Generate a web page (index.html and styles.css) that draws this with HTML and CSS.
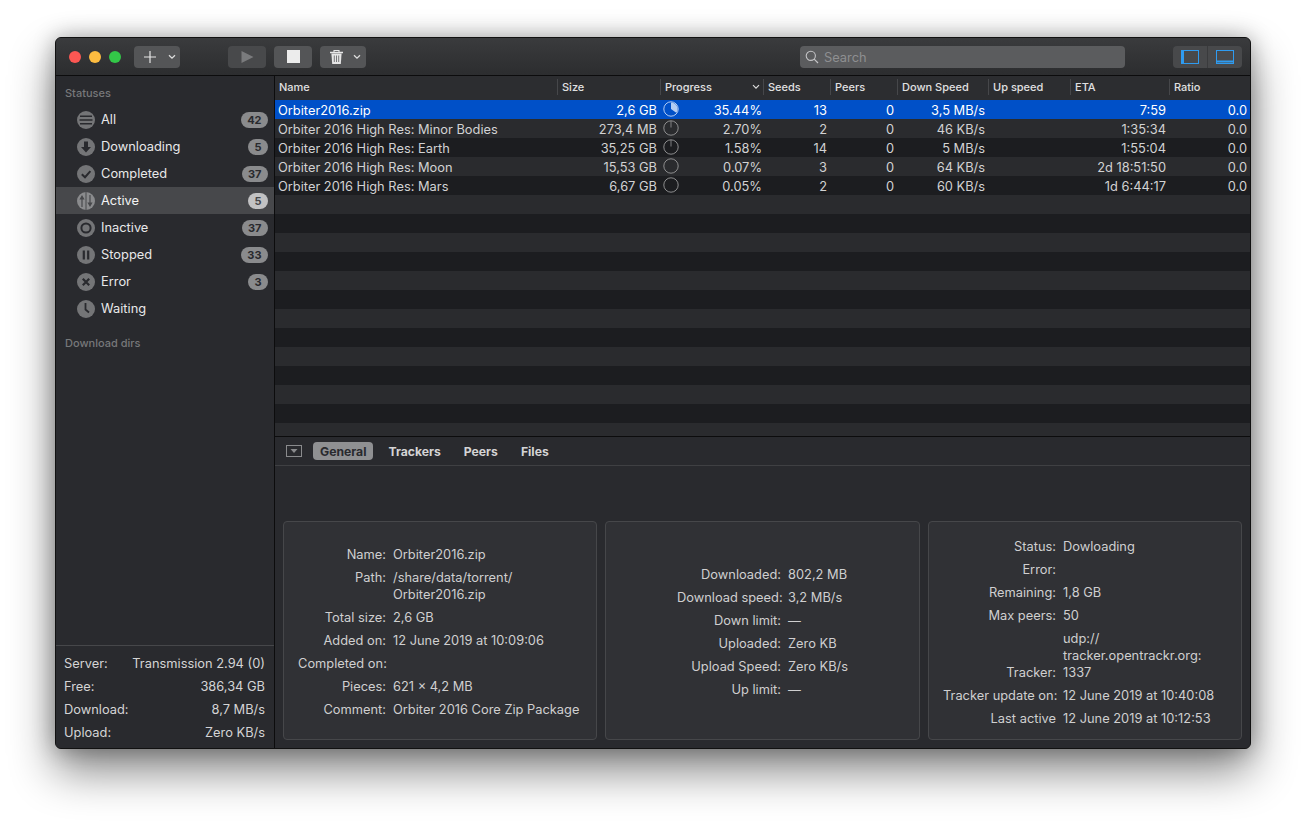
FILE: index.html
```html
<!DOCTYPE html>
<html lang="en">
<head>
<meta charset="utf-8">
<title>Transmission Remote</title>
<link rel="stylesheet" href="styles.css">
</head>
<body>
<div class="window">
  <header class="titlebar">
    <div class="lights"><span class="light red"></span><span class="light yellow"></span><span class="light green"></span></div>
    <div class="tbtn add">
      <svg width="14" height="14" viewBox="0 0 14 14"><path d="M7 1v12M1 7h12" stroke="#e6e6e6" stroke-width="1.2" fill="none"/></svg>
      <svg class="chev" width="8" height="6" viewBox="0 0 8 6"><path d="M1 1.2 4 4.2 7 1.2" stroke="#dcdcdc" stroke-width="1.3" fill="none"/></svg>
    </div>
    <div class="tbtn play">
      <svg width="13" height="14" viewBox="0 0 13 14"><path d="M0.5 1v12L12.5 7z" fill="#7a7b7d"/></svg>
    </div>
    <div class="tbtn stop"><span class="stopsq"></span></div>
    <div class="tbtn trash">
      <svg width="15" height="16" viewBox="0 0 15 16"><path d="M1 3.5h13" stroke="#e6e6e6" stroke-width="1.4"/><path d="M5 3.2V1.5h5v1.7" stroke="#e6e6e6" stroke-width="1.1" fill="none"/><path d="M2.4 4.5 3.2 15h8.6l.8-10.5z" fill="#e6e6e6"/><path d="M5.3 6.5v6.5M7.5 6.5v6.5M9.7 6.5v6.5" stroke="#6a6b6d" stroke-width=".9"/></svg>
      <svg class="chev" width="8" height="6" viewBox="0 0 8 6"><path d="M1 1.2 4 4.2 7 1.2" stroke="#dcdcdc" stroke-width="1.3" fill="none"/></svg>
    </div>
    <div class="search">
      <svg width="14" height="14" viewBox="0 0 14 14"><circle cx="5.8" cy="5.8" r="4.6" stroke="#c4c4c6" stroke-width="1.1" fill="none"/><path d="M9.2 9.2 13 13" stroke="#c4c4c6" stroke-width="1.2"/></svg>
      <span class="search-text">Search</span>
    </div>
    <div class="toggles">
      <div class="toggle">
        <svg width="18" height="14" viewBox="0 0 18 14"><rect x=".5" y=".5" width="17" height="13" fill="none" stroke="#2f9bf0"/><path d="M2 .5v13" stroke="#2f9bf0" stroke-width="2"/></svg>
      </div>
      <div class="toggle">
        <svg width="18" height="14" viewBox="0 0 18 14"><rect x=".5" y=".5" width="17" height="13" fill="none" stroke="#2f9bf0"/><path d="M.5 11.5h17" stroke="#2f9bf0" stroke-width="2"/></svg>
      </div>
    </div>
  </header>

  <div class="main">
    <aside class="sidebar">
      <div class="sec-title first">Statuses</div>
      <ul class="statuses">
        <li class="status">
          <svg class="sicon" viewBox="0 0 18 18"><circle cx="9" cy="9" r="9" fill="#747577"/><path d="M3 5.3h12M2.5 9h13M3 12.7h12" stroke="#292a2e" stroke-width="1.6"/></svg>
          <span class="sname">All</span><span class="badge">42</span>
        </li>
        <li class="status">
          <svg class="sicon" viewBox="0 0 18 18"><circle cx="9" cy="9" r="9" fill="#747577"/><path d="M7 3.5h4v5.5h3L9 14.5 4 9h3z" fill="#292a2e"/></svg>
          <span class="sname">Downloading</span><span class="badge">5</span>
        </li>
        <li class="status">
          <svg class="sicon" viewBox="0 0 18 18"><circle cx="9" cy="9" r="9" fill="#747577"/><path d="M4.8 9.2 8 12.2 13.4 6.2" stroke="#292a2e" stroke-width="2" fill="none"/></svg>
          <span class="sname">Completed</span><span class="badge">37</span>
        </li>
        <li class="status on">
          <svg class="sicon" viewBox="0 0 18 18"><circle cx="9" cy="9" r="9" fill="#8a8b8d"/><path d="M9 0v18" stroke="#47484b" stroke-width="1"/><path d="M5.6 15V7.5H7.6L5 3 2.4 7.5H4.4V15zM12.4 3v7.5H10.4L13 15l2.6-4.5H13.6V3z" fill="#47484b"/></svg>
          <span class="sname">Active</span><span class="badge lite">5</span>
        </li>
        <li class="status">
          <svg class="sicon" viewBox="0 0 18 18"><circle cx="9" cy="9" r="9" fill="#747577"/><circle cx="9" cy="9" r="4.6" fill="none" stroke="#292a2e" stroke-width="2"/></svg>
          <span class="sname">Inactive</span><span class="badge">37</span>
        </li>
        <li class="status">
          <svg class="sicon" viewBox="0 0 18 18"><circle cx="9" cy="9" r="9" fill="#747577"/><path d="M6.8 4.5v9M11.2 4.5v9" stroke="#292a2e" stroke-width="2.2"/></svg>
          <span class="sname">Stopped</span><span class="badge">33</span>
        </li>
        <li class="status">
          <svg class="sicon" viewBox="0 0 18 18"><circle cx="9" cy="9" r="9" fill="#747577"/><path d="M5.8 5.8 12.2 12.2M12.2 5.8 5.8 12.2" stroke="#292a2e" stroke-width="2.2"/></svg>
          <span class="sname">Error</span><span class="badge">3</span>
        </li>
        <li class="status">
          <svg class="sicon" viewBox="0 0 18 18"><circle cx="9" cy="9" r="9" fill="#747577"/><path d="M8.5 3v6.5l3.5 3" stroke="#292a2e" stroke-width="1.8" fill="none"/></svg>
          <span class="sname">Waiting</span>
        </li>
      </ul>
      <div class="sec-title">Download dirs</div>
      <dl class="footer">
        <div class="frow"><dt>Server:</dt><dd>Transmission 2.94 (0)</dd></div>
        <div class="frow"><dt>Free:</dt><dd>386,34 GB</dd></div>
        <div class="frow"><dt>Download:</dt><dd>8,7 MB/s</dd></div>
        <div class="frow"><dt>Upload:</dt><dd>Zero KB/s</dd></div>
      </dl>
    </aside>

    <section class="content">
      <div class="list">
        <div class="cols thead">
          <div class="th">Name</div>
          <div class="th">Size</div>
          <div class="th sort">Progress<svg width="8" height="6" viewBox="0 0 8 6"><path d="M1 1.2 4 4.2 7 1.2" stroke="#dcdcdc" stroke-width="1.2" fill="none"/></svg></div>
          <div class="th">Seeds</div>
          <div class="th">Peers</div>
          <div class="th">Down Speed</div>
          <div class="th">Up speed</div>
          <div class="th">ETA</div>
          <div class="th">Ratio</div>
        </div>
        <div class="tbody">
          <div class="cols row sel">
            <div class="td name">Orbiter2016.zip</div>
            <div class="td num">2,6 GB</div>
            <div class="td prog"><svg class="pie" viewBox="0 0 16 16"><circle cx="8" cy="8" r="7.2" fill="none" stroke="#c4d8f7" stroke-width=".9"/><path d="M8 8V1.5A6.5 6.5 0 0 1 13.26 11.82z" fill="#b4cdf3"/></svg><span>35.44%</span></div>
            <div class="td num">13</div><div class="td num">0</div><div class="td num">3,5 MB/s</div><div class="td num"></div><div class="td num">7:59</div><div class="td num">0.0</div>
          </div>
          <div class="cols row">
            <div class="td name">Orbiter 2016 High Res: Minor Bodies</div>
            <div class="td num">273,4 MB</div>
            <div class="td prog"><svg class="pie" viewBox="0 0 16 16"><circle cx="8" cy="8" r="7.2" fill="none" stroke="#98989a" stroke-width=".9"/><path d="M8 7.5V1" stroke="#98989a" stroke-width=".8"/></svg><span>2.70%</span></div>
            <div class="td num">2</div><div class="td num">0</div><div class="td num">46 KB/s</div><div class="td num"></div><div class="td num">1:35:34</div><div class="td num">0.0</div>
          </div>
          <div class="cols row">
            <div class="td name">Orbiter 2016 High Res: Earth</div>
            <div class="td num">35,25 GB</div>
            <div class="td prog"><svg class="pie" viewBox="0 0 16 16"><circle cx="8" cy="8" r="7.2" fill="none" stroke="#98989a" stroke-width=".9"/><path d="M8 7.5V1" stroke="#98989a" stroke-width=".8"/></svg><span>1.58%</span></div>
            <div class="td num">14</div><div class="td num">0</div><div class="td num">5 MB/s</div><div class="td num"></div><div class="td num">1:55:04</div><div class="td num">0.0</div>
          </div>
          <div class="cols row">
            <div class="td name">Orbiter 2016 High Res: Moon</div>
            <div class="td num">15,53 GB</div>
            <div class="td prog"><svg class="pie" viewBox="0 0 16 16"><circle cx="8" cy="8" r="7.2" fill="none" stroke="#98989a" stroke-width=".9"/></svg><span>0.07%</span></div>
            <div class="td num">3</div><div class="td num">0</div><div class="td num">64 KB/s</div><div class="td num"></div><div class="td num">2d 18:51:50</div><div class="td num">0.0</div>
          </div>
          <div class="cols row">
            <div class="td name">Orbiter 2016 High Res: Mars</div>
            <div class="td num">6,67 GB</div>
            <div class="td prog"><svg class="pie" viewBox="0 0 16 16"><circle cx="8" cy="8" r="7.2" fill="none" stroke="#98989a" stroke-width=".9"/></svg><span>0.05%</span></div>
            <div class="td num">2</div><div class="td num">0</div><div class="td num">60 KB/s</div><div class="td num"></div><div class="td num">1d 6:44:17</div><div class="td num">0.0</div>
          </div>
        </div>
      </div>

      <div class="detail">
        <nav class="tabs">
          <svg class="collapse" width="16" height="12" viewBox="0 0 16 12"><rect x=".5" y=".5" width="15" height="11" fill="none" stroke="#8a8b8d"/><path d="M4.5 4h7L8 8z" fill="#8a8b8d"/></svg>
          <span class="tab active">General</span>
          <span class="tab">Trackers</span>
          <span class="tab">Peers</span>
          <span class="tab">Files</span>
        </nav>
        <div class="panels">
          <div class="panel p1">
            <div class="kv">
              <span class="k">Name:</span><span class="v">Orbiter2016.zip</span>
              <span class="k">Path:</span><span class="v">/share/data/torrent/<br>Orbiter2016.zip</span>
              <span class="k">Total size:</span><span class="v">2,6 GB</span>
              <span class="k">Added on:</span><span class="v">12 June 2019 at 10:09:06</span>
              <span class="k">Completed on:</span><span class="v"></span>
              <span class="k">Pieces:</span><span class="v">621 × 4,2 MB</span>
              <span class="k">Comment:</span><span class="v">Orbiter 2016 Core Zip Package</span>
            </div>
          </div>
          <div class="panel p2">
            <div class="kv">
              <span class="k">Downloaded:</span><span class="v">802,2 MB</span>
              <span class="k">Download speed:</span><span class="v">3,2 MB/s</span>
              <span class="k">Down limit:</span><span class="v">—</span>
              <span class="k">Uploaded:</span><span class="v">Zero KB</span>
              <span class="k">Upload Speed:</span><span class="v">Zero KB/s</span>
              <span class="k">Up limit:</span><span class="v">—</span>
            </div>
          </div>
          <div class="panel p3">
            <div class="kv">
              <span class="k">Status:</span><span class="v">Dowloading</span>
              <span class="k">Error:</span><span class="v"></span>
              <span class="k">Remaining:</span><span class="v">1,8 GB</span>
              <span class="k">Max peers:</span><span class="v">50</span>
              <span class="k bottom">Tracker:</span><span class="v">udp://<br>tracker.opentrackr.org:<br>1337</span>
              <span class="k">Tracker update on:</span><span class="v">12 June 2019 at 10:40:08</span>
              <span class="k">Last active</span><span class="v">12 June 2019 at 10:12:53</span>
            </div>
          </div>
        </div>
      </div>
    </section>
  </div>
</div>
</body>
</html>
```

FILE: styles.css
```css
* { box-sizing: border-box; }
html, body { margin: 0; height: 100%; overflow: hidden; }
body {
  background: #fff;
  padding: 37px 55px 0;
  font-family: Inter, "Liberation Sans", sans-serif;
  font-size: 12.85px;
  color: #d4d4d5;
}
.window {
  width: 1196px;
  height: 712px;
  display: flex;
  flex-direction: column;
  border: 1px solid #111;
  border-radius: 6px;
  background: #292a2e;
  overflow: hidden;
  box-shadow: 0 22px 45px rgba(0,0,0,.48), 0 0 22px rgba(0,0,0,.3);
}
.titlebar {
  height: 38px;
  flex: none;
  display: flex;
  align-items: center;
  padding: 0 8px 0 13px;
  background: linear-gradient(#3a3b3d, #2c2d2f);
  border-bottom: 1px solid #0c0c0d;
}
.titlebar > * { flex: none; }
.lights { display: flex; gap: 8px; margin-right: 13px; }
.light { width: 12px; height: 12px; border-radius: 50%; }
.red { background: #fc5753; }
.yellow { background: #fdbc40; }
.green { background: #33c748; }
.tbtn {
  height: 22px;
  display: flex;
  align-items: center;
  justify-content: center;
  background: #545557;
  border-radius: 4px;
}
.add { width: 46px; justify-content: flex-start; gap: 11px; padding-left: 9px; margin-right: 48px; }
.play { width: 38px; margin-right: 8px; background: #48494b; }
.stop { width: 38px; margin-right: 8px; }
.stopsq { width: 13px; height: 13px; background: #ececec; }
.trash { width: 46px; justify-content: flex-start; gap: 9px; padding-left: 9px; margin-right: 434px; }
.search {
  width: 325px;
  height: 22px;
  display: flex;
  align-items: center;
  gap: 5px;
  padding-left: 5px;
  background: #5b5c5e;
  border-radius: 4px;
  color: #8e8f91;
}
.search-text { padding-top: 1px; }
.toggles {
  margin-left: 48px;
  width: 69px;
  height: 22px;
  display: flex;
  background: #48494b;
  border-radius: 4px;
}
.toggle { flex: 1; display: flex; align-items: center; justify-content: center; }
.toggle + .toggle { border-left: 1px solid #3a3b3d; }

.main { flex: 1; display: flex; min-height: 0; }
.sidebar {
  width: 219px;
  flex: none;
  display: flex;
  flex-direction: column;
  background: #292a2e;
  border-right: 1px solid #0c0c0d;
}
.sec-title {
  padding-left: 9px;
  margin-top: 11px;
  height: 20px;
  line-height: 20px;
  font-size: 11px;
  font-weight: 500;
  color: #77787a;
}
.sec-title.first { margin-top: 7px; margin-bottom: 3px; }
.statuses { list-style: none; margin: 0; padding: 0; }
.status {
  height: 27px;
  display: flex;
  align-items: center;
  padding: 0 6px 0 21px;
  color: #e8e8e9;
}
.status.on { background: #47484b; color: #f4f4f4; }
.sicon { width: 18px; height: 18px; flex: none; }
.sname { margin-left: 6px; flex: 1; }
.badge {
  min-width: 20px;
  height: 16px;
  padding: 0 6.5px;
  border-radius: 8px;
  background: #8a8b8d;
  color: #292a2e;
  font-size: 11px;
  font-weight: 700;
  line-height: 16px;
  text-align: center;
}
.badge.lite { background: #c2c2c3; color: #45464a; }
.footer { margin: auto 0 0; padding: 6px 9px 4px 8px; border-top: 1px solid #46474a; }
.frow { height: 23px; display: flex; align-items: center; justify-content: space-between; }
.footer dt, .footer dd { margin: 0; }

.content { flex: 1; min-width: 0; display: flex; flex-direction: column; }
.list { height: 360px; flex: none; display: flex; flex-direction: column; }
.cols {
  display: grid;
  grid-template-columns: 282px 103px 103px 67px 67px 91px 82px 99px 81px;
}
.thead {
  height: 24px;
  flex: none;
  background: #2c2d30;
  padding-bottom: 2px;
  align-items: center;
}
.th {
  padding-left: 4px;
  height: 16px;
  line-height: 16px;
  font-size: 11px;
  font-weight: 500;
  color: #e0e0e1;
  border-left: 1px solid #46474a;
}
.th:first-child { border-left: 0; }
.sort { display: flex; align-items: center; justify-content: space-between; padding-right: 3px; }
.tbody {
  flex: 1;
  background: repeating-linear-gradient(#1c1d20 0 19px, #2a2b2e 19px 38px);
}
.row { height: 19px; align-items: center; color: #d2d2d3; }
.row.sel { background: #0050c8; color: #fff; }
.td { padding: 2px 3px 0; white-space: nowrap; line-height: 17px; height: 19px; }
.num { text-align: right; }
.prog { display: flex; align-items: center; justify-content: space-between; padding-right: 1px; }
.pie { width: 16px; height: 16px; flex: none; margin-top: -4px; }
.prog span { line-height: 17px; }

.detail { flex: 1; min-height: 0; display: flex; flex-direction: column; border-top: 1px solid #0c0c0d; background: #292a2e; }
.tabs {
  height: 29px;
  flex: none;
  display: flex;
  align-items: center;
  padding-left: 11px;
  border-bottom: 1px solid #3f4043;
  font-size: 12.2px;
  font-weight: 700;
  color: #d4d4d5;
}
.collapse { margin-right: 11px; }
.tab { padding: 0 7px; height: 18px; line-height: 19px; margin-right: 9px; }
.tab.active { background: #8f9092; color: #292a2e; border-radius: 4px; margin-right: 8px; }
.panels {
  flex: 1;
  display: grid;
  grid-template-columns: 314px 315px 314px;
  gap: 8px;
  padding: 55px 8px 8px;
}
.panel {
  display: flex;
  align-items: center;
  padding-top: 2px;
  background: #303135;
  border: 1px solid #46474a;
  border-radius: 4px;
}
.kv {
  display: grid;
  column-gap: 7px;
  row-gap: 6px;
  line-height: 17px;
}
.p1 { padding-left: 14px; }
.p1 .kv { grid-template-columns: 88px 1fr; }
.p2 { padding-left: 71px; }
.p2 .kv { grid-template-columns: 104px 1fr; }
.p3 { padding-left: 14px; padding-top: 4px; }
.p3 .kv { grid-template-columns: 113px 1fr; }
.k { text-align: right; white-space: nowrap; color: #cfcfd0; }
.k.bottom { align-self: end; }
.v { white-space: nowrap; color: #cfcfd0; }
```
